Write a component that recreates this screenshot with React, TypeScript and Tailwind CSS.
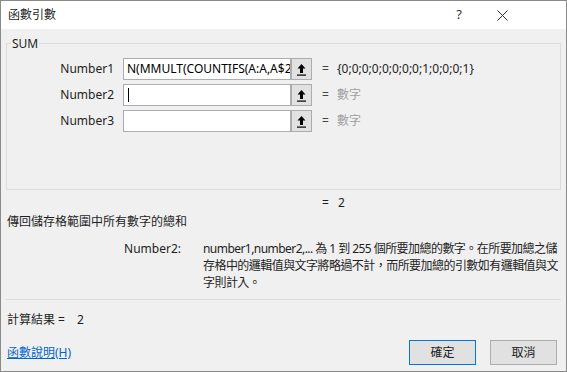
const font = "font-['Noto_Sans','Noto_Sans_CJK_TC',sans-serif]"

function RefButton() {
  return (
    <div className="w-[21px] h-[22px] border border-[#adadad] bg-[#e1e1e1] flex items-center justify-center">
      <svg width="11" height="13" viewBox="0 0 11 13">
        <path d="M5.5 1 L9.5 5.5 L7 5.5 L7 10 L4 10 L4 5.5 L1.5 5.5 Z" fill="#000" />
        <rect x="1" y="11.5" width="9" height="1.2" fill="#000" />
      </svg>
    </div>
  )
}

function ArgRow({ label, value, result, muted, caret }: { label: string; value?: string; result: string; muted?: boolean; caret?: boolean }) {
  return (
    <div className="flex items-center h-[22px]">
      <div className="w-[107px] text-right text-[12px] text-[#1e1e1e]">{label}</div>
      <div className="ml-[9px] w-[168px] h-[22px] border border-[#abadb3] bg-white flex items-center pl-[3px] overflow-hidden text-[12px] whitespace-nowrap">
        {value}
        {caret && <span className="inline-block w-px h-[14px] bg-black ml-px" />}
      </div>
      <RefButton />
      <div className="ml-[10px] w-[15px] text-[12px] text-[#444]">=</div>
      <div className={`text-[12px] ${muted ? 'text-[#a0a0a0]' : 'text-[#1e1e1e]'}`}>{result}</div>
    </div>
  )
}

export default function App() {
  return (
    <div className={`w-[567px] h-[372px] border border-[#8a8a8a] bg-[#f0f0f0] flex flex-col ${font}`}>
      <div className="h-[28px] bg-white flex items-center pl-[7px] pr-[58px] text-[12px] text-[#1e1e1e]">
        <div>函數引數</div>
        <div className="ml-auto text-[13px] text-[#333]">?</div>
        <svg className="ml-[35px]" width="11" height="11" viewBox="0 0 11 11">
          <path d="M0.5 0.5 L10.5 10.5 M10.5 0.5 L0.5 10.5" stroke="#333" strokeWidth="1" />
        </svg>
      </div>

      <div className="flex-1 px-[5px] flex flex-col">
        <div className="relative mt-[14px] h-[147px] border border-[#dcdcdc] pt-[14px] flex flex-col gap-[4px]">
          <div className="absolute top-[-9px] left-[4px] bg-[#f0f0f0] px-[1px] text-[12px] text-[#1e1e1e]">SUM</div>
          <ArgRow label="Number1" value="N(MMULT(COUNTIFS(A:A,A$2" result="{0;0;0;0;0;0;0;0;1;0;0;0;1}" />
          <ArgRow label="Number2" result="數字" muted caret />
          <ArgRow label="Number3" result="數字" muted />
        </div>

        <div className="mt-[4px] h-[18px] flex items-center text-[12px] text-[#1e1e1e]">
          <span className="ml-[316px]">=</span>
          <span className="ml-[9px]">2</span>
        </div>

        <div className="mt-[1px] pl-[1px] text-[12px] text-[#1e1e1e]">傳回儲存格範圍中所有數字的總和</div>

        <div className="mt-[9px] flex text-[12px] leading-[17px] text-[#1e1e1e]">
          <div className="w-[175px] shrink-0 text-right">Number2:</div>
          <div className="ml-[22px] whitespace-nowrap tracking-[-0.55px]">
            <div>number1,number2,... 為 1 到 255 個所要加總的數字。在所要加總之儲</div>
            <div>存格中的邏輯值與文字將略過不計，而所要加總的引數如有邏輯值與文</div>
            <div>字則計入。</div>
          </div>
        </div>

        <div className="mt-[8px] h-px bg-[#dcdcdc]" />

        <div className="mt-[11px] pl-[1px] flex text-[12px] text-[#1e1e1e]">
          <span>計算結果 =</span>
          <span className="ml-[12px]">2</span>
        </div>

        <div className="mt-[11px] flex items-center">
          <a className="pl-[1px] text-[12px] text-[#0066cc] underline">函數說明(H)</a>
          <div className="ml-auto flex gap-[14px] mr-[4px]">
            <button className="w-[67px] h-[25px] border border-[#0078d7] bg-[#e1e1e1] text-[12px] text-[#1e1e1e]">確定</button>
            <button className="w-[67px] h-[25px] border border-[#adadad] bg-[#e1e1e1] text-[12px] text-[#1e1e1e]">取消</button>
          </div>
        </div>
      </div>
    </div>
  )
}
